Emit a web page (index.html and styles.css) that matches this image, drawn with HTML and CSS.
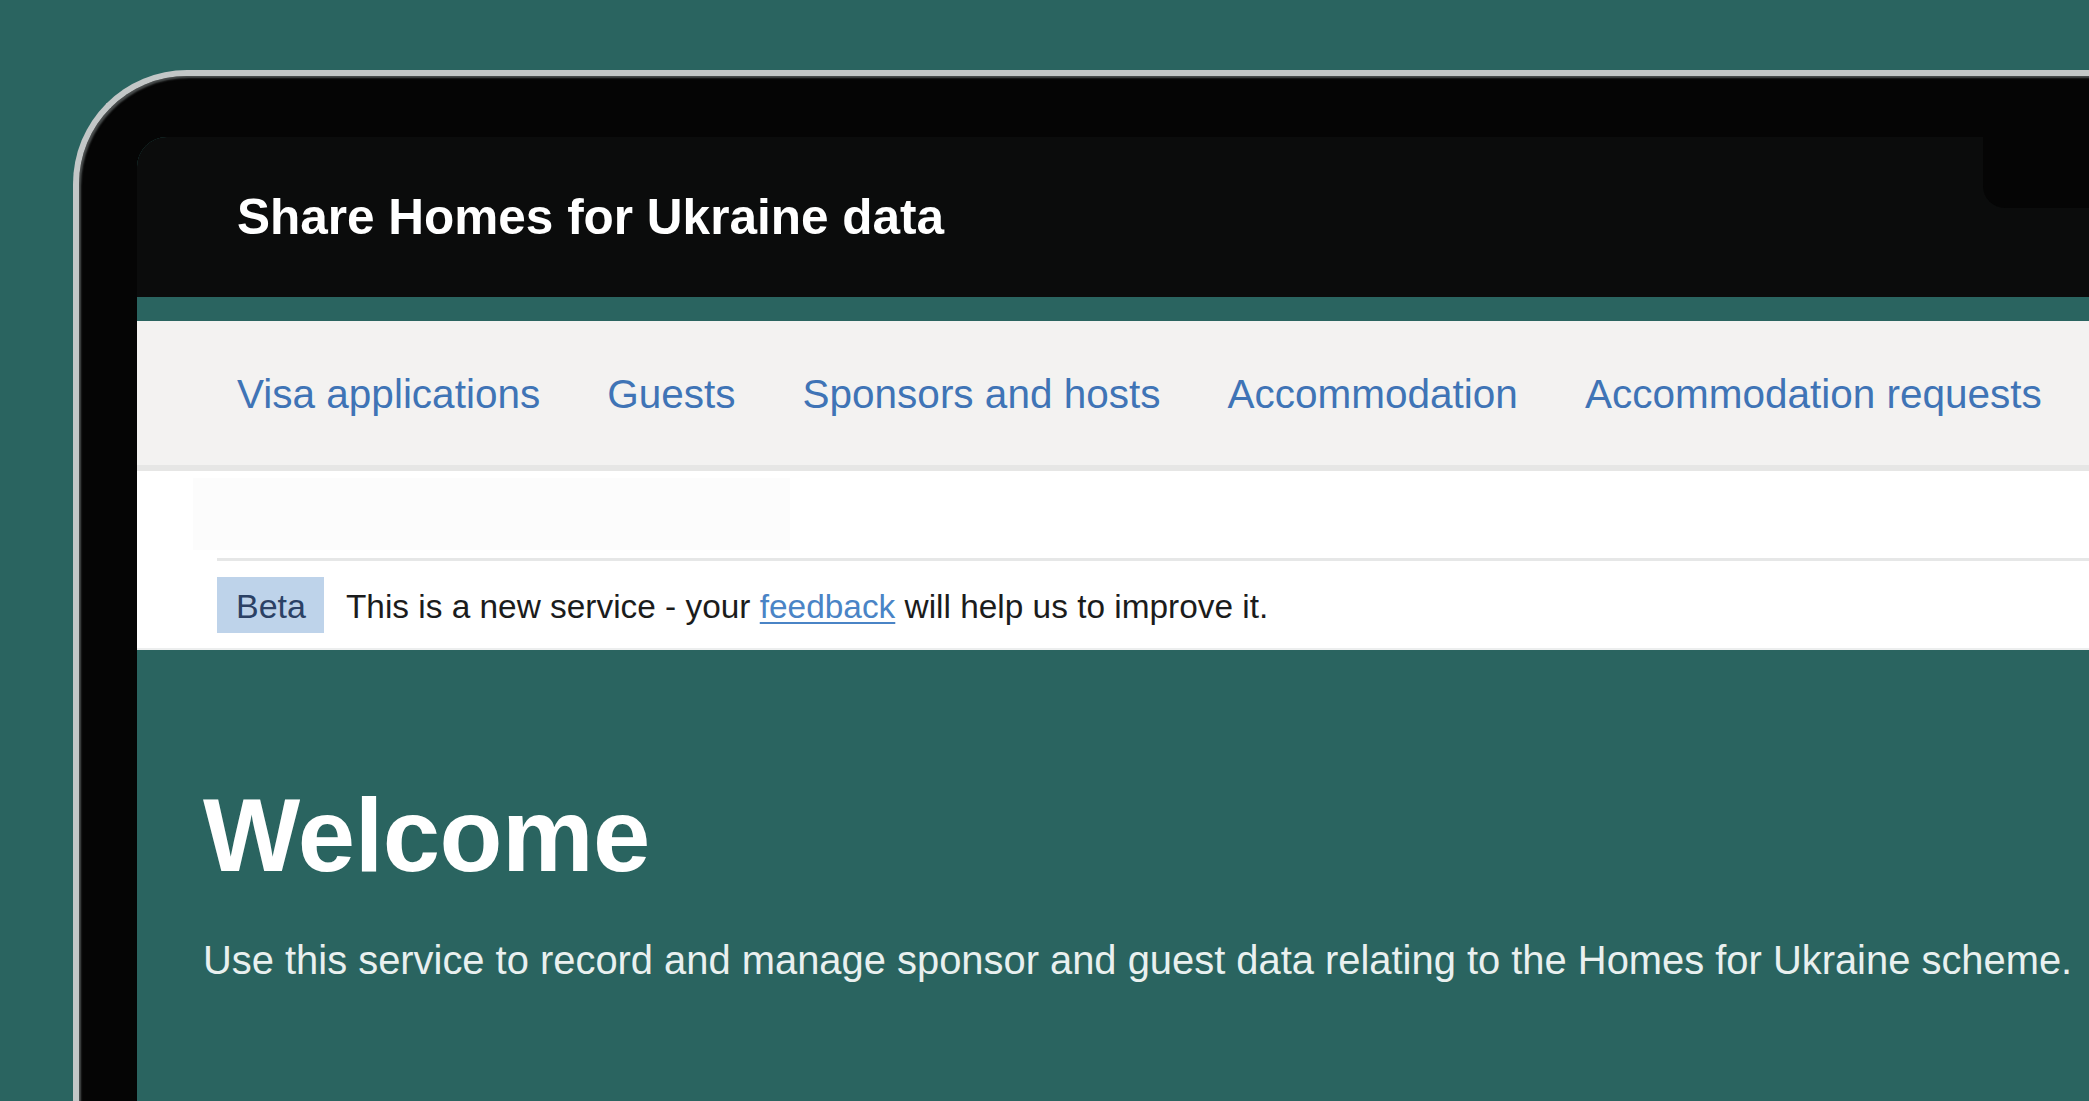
FILE: index.html
```html
<!DOCTYPE html>
<html lang="en">
<head>
    <meta charset="UTF-8">
    <meta name="viewport" content="width=device-width, initial-scale=1.0">
    <title>Share Homes for Ukraine data</title>
    <link rel="stylesheet" href="styles.css">
</head>
<body>
    <div class="device">
        <div class="camera-notch"></div>
        <div class="screen">
            <header class="service-header">
                <span class="service-name">Share Homes for Ukraine data</span>
            </header>

            <nav class="service-nav">
                <a href="#">Visa applications</a>
                <a href="#">Guests</a>
                <a href="#">Sponsors and hosts</a>
                <a href="#">Accommodation</a>
                <a href="#">Accommodation requests</a>
            </nav>

            <div class="notice-strip">
                <div class="crumbs"></div>
                <div class="phase-banner">
                    <strong class="phase-tag">Beta</strong>
                    <span class="phase-text">This is a new service - your <a href="#">feedback</a> will help us to improve it.</span>
                </div>
            </div>

            <main class="main">
                <h1>Welcome</h1>
                <p>Use this service to record and manage sponsor and guest data relating to the Homes for Ukraine scheme.</p>
            </main>
        </div>
    </div>
</body>
</html>
```

FILE: styles.css
```css
:root {
    --teal: #2a6460;
    --ink: #0b0c0c;
    --bezel: #050505;
    --link: #3f74b6;
}

* {
    box-sizing: border-box;
    margin: 0;
    padding: 0;
}

html, body {
    height: 100%;
}

body {
    background: var(--teal);
    font-family: "Liberation Sans", Arial, sans-serif;
    overflow: hidden;
}

/* laptop frame */
.device {
    position: relative;
    width: 2200px;
    height: 1100px;
    margin: 70px 0 0 73px;
    padding: 61px 0 0 58px;
    background: var(--bezel);
    border-top: 6px solid #c3c7c7;
    border-left: 6px solid #c3c7c7;
    border-top-left-radius: 114px;
    box-shadow: inset 2px 2px 2px #4a4e4e;
}

.camera-notch {
    position: absolute;
    top: 61px;
    left: 1904px;
    width: 300px;
    height: 71px;
    background: var(--bezel);
    border-bottom-left-radius: 22px;
}

.screen {
    height: 100%;
    background: var(--teal);
    border-top-left-radius: 30px;
    overflow: hidden;
}

/* header */
.service-header {
    height: 184px;
    padding: 55px 0 0 100px;
    background: var(--ink);
    border-bottom: 24px solid var(--teal);
}

.service-name {
    display: block;
    color: #fff;
    font-size: 49.5px;
    font-weight: 700;
    line-height: 1;
}

/* navigation */
.service-nav {
    display: flex;
    gap: 67px;
    height: 150px;
    padding: 53px 0 0 100px;
    background: #f3f2f1;
    border-bottom: 6px solid #e6e6e5;
}

.service-nav a {
    color: var(--link);
    font-size: 40.5px;
    line-height: 1;
    text-decoration: none;
    white-space: nowrap;
}

/* beta strip */
.notice-strip {
    background: #fff;
    padding-top: 7px;
    border-bottom: 2px solid #eceeee;
}

.crumbs {
    width: 597px;
    height: 72px;
    margin-left: 56px;
    background: #fcfcfc;
}

.phase-banner {
    display: flex;
    align-items: center;
    gap: 22px;
    margin: 8px 0 0 80px;
    padding: 16px 0 15px;
    border-top: 3px solid #e6e7e7;
}

.phase-tag {
    display: flex;
    align-items: center;
    height: 56px;
    padding: 2px 18px 0 19px;
    background: #bed3ea;
    color: #2b4165;
    font-size: 34px;
    font-weight: 400;
}

.phase-text {
    color: #1b1c1c;
    font-size: 33.4px;
    white-space: nowrap;
    padding-top: 3px;
}

.phase-text a {
    color: #4a84c6;
    text-decoration: underline;
    text-decoration-thickness: 2px;
    text-underline-offset: 4px;
}

/* main content */
.main {
    padding: 134px 0 0 66px;
    color: #fff;
}

.main h1 {
    font-size: 103px;
    font-weight: 700;
    line-height: 1;
    letter-spacing: -0.5px;
}

.main p {
    margin-top: 54px;
    color: #e9f0ef;
    font-size: 39.9px;
    line-height: 1;
    white-space: nowrap;
}
```
